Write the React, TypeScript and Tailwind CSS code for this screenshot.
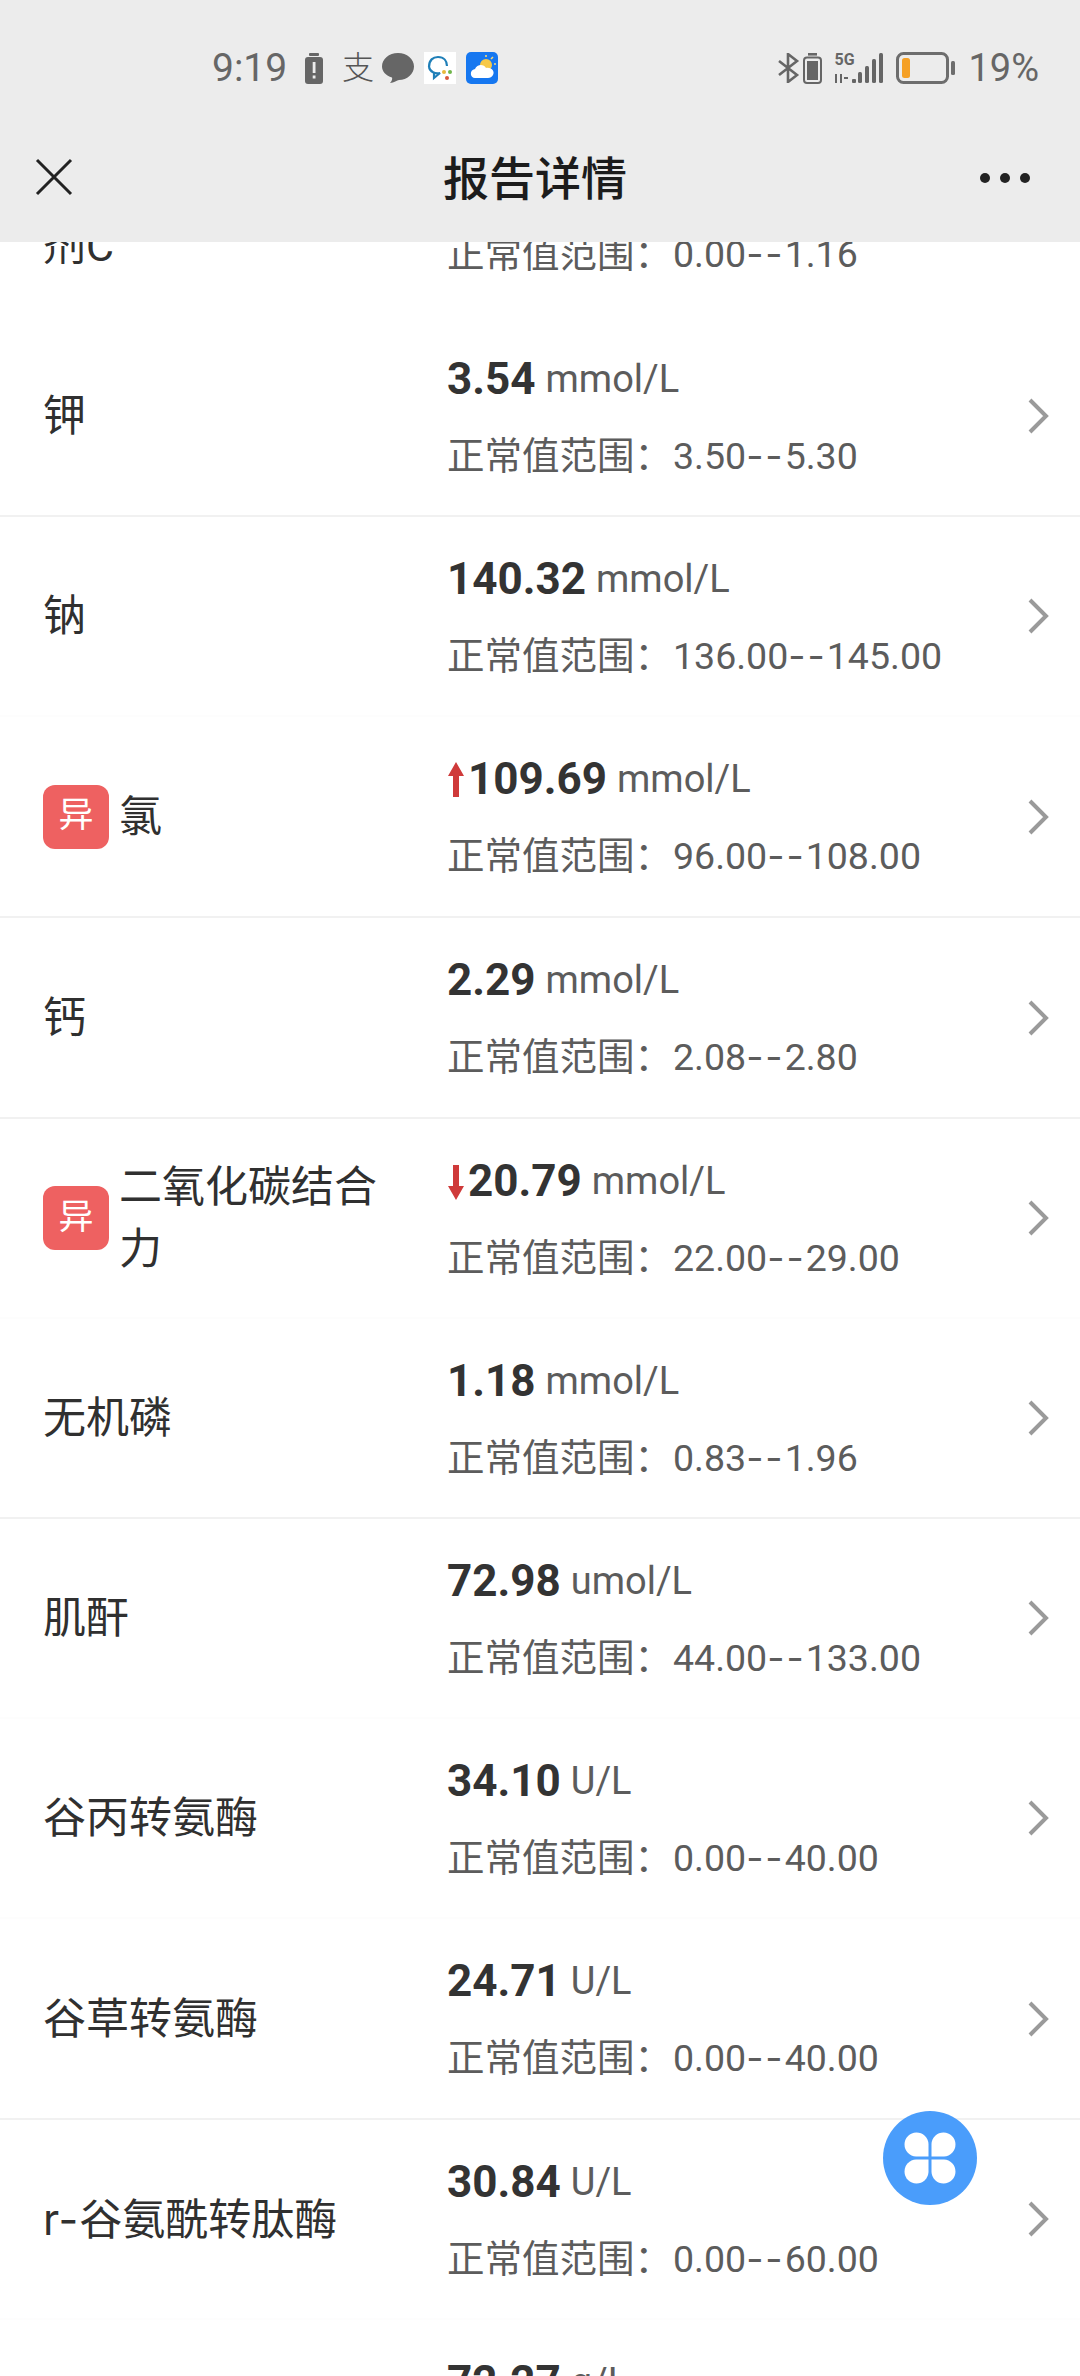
import React from "react";

const FONT = 'font-["Roboto","Noto_Sans_CJK_SC",sans-serif]';

type Item = {
  name: string;
  prefix?: string;
  value: string;
  unit: string;
  range: [string, string];
  flag?: "up" | "down";
  strong?: boolean;
  height?: string;
};

const items: Item[] = [
  { name: "钾", value: "3.54", unit: "mmol/L", range: ["3.50", "5.30"], strong: true },
  { name: "钠", value: "140.32", unit: "mmol/L", range: ["136.00", "145.00"] },
  { name: "氯", value: "109.69", unit: "mmol/L", range: ["96.00", "108.00"], flag: "up", strong: true, height: "h-[201px]" },
  { name: "钙", value: "2.29", unit: "mmol/L", range: ["2.08", "2.80"], strong: true, height: "h-[201px]" },
  { name: "二氧化碳结合力", value: "20.79", unit: "mmol/L", range: ["22.00", "29.00"], flag: "down" },
  { name: "无机磷", value: "1.18", unit: "mmol/L", range: ["0.83", "1.96"], strong: true },
  { name: "肌酐", value: "72.98", unit: "umol/L", range: ["44.00", "133.00"] },
  { name: "谷丙转氨酶", value: "34.10", unit: "U/L", range: ["0.00", "40.00"] },
  { name: "谷草转氨酶", value: "24.71", unit: "U/L", range: ["0.00", "40.00"], strong: true, height: "h-[201px]" },
  { name: "谷氨酰转肽酶", prefix: "r-", value: "30.84", unit: "U/L", range: ["0.00", "60.00"] },
];

function Arrow({ dir }: { dir: "up" | "down" }) {
  return (
    <svg width="18" height="36" viewBox="0 0 18 36" className="shrink-0 mr-[3px] mt-[2px]">
      <g transform={dir === "down" ? "rotate(180 9 18)" : undefined}>
        <path d="M9 0 L17 14 H12 V35 H6 V14 H1 Z" fill="#cf3a3a" />
      </g>
    </svg>
  );
}

function Chevron() {
  return (
    <svg width="22" height="38" viewBox="0 0 22 38" className="shrink-0">
      <path d="M3 3 L19 19 L3 35" fill="none" stroke="#9a9a9a" strokeWidth="4" />
    </svg>
  );
}

function RangeLine({ range }: { range: [string, string] }) {
  return (
    <>
      正常值范围：
      <span className="ml-[1px]">
        {range[0]}
        <span className='font-["Inter"] tracking-[2px]'>--</span>
        {range[1]}
      </span>
    </>
  );
}

function ResultRow({ item }: { item: Item }) {
  return (
    <div
      className={`flex items-center border-b-2 ${item.height ?? "h-[200px]"} ${
        item.strong ? "border-[#f1f1f1]" : "border-[#fdfdfd]"
      }`}
    >
      <div className="flex items-center w-[447px] shrink-0 pl-[43px] pr-[60px]">
        {item.flag && (
          <span className="flex items-center justify-center shrink-0 w-[66px] h-[64px] mr-[10px] rounded-[12px] bg-[#ee6161] text-white text-[35px]">
            异
          </span>
        )}
        <span className="text-[43px] leading-[62px] text-[#303030]">
          {item.prefix && <span className='font-["Inter"] tracking-[1px]'>{item.prefix}</span>}
          {item.name}
        </span>
      </div>
      <div className="flex-1 flex flex-col self-start pt-[23px]">
        <div className="flex items-center h-[78px]">
          {item.flag && <Arrow dir={item.flag} />}
          <span className="text-[44px] font-bold text-[#333333]">{item.value}</span>
          <span className="ml-[10px] text-[38px] text-[#5c5c5c]">{item.unit}</span>
        </div>
        <div className="h-[78px] -mt-[1px] leading-[78px] text-[37.5px] text-[#5c5c5c]">
          <RangeLine range={item.range} />
        </div>
      </div>
      <div className="w-[53px] shrink-0">
        <Chevron />
      </div>
    </div>
  );
}

function StatusBar() {
  return (
    <div className="flex items-center h-[136px] pl-[212px] pr-[41px] text-[#666666]">
      <span className="w-[93px] shrink-0 text-[39px] leading-none">9:19</span>
      <svg width="18" height="31" viewBox="0 0 18 31" className="shrink-0">
        <rect x="4" y="0" width="10" height="3" rx="1" fill="#666" />
        <rect x="0" y="4" width="18" height="27" rx="3" fill="#666" />
        <rect x="7.7" y="9" width="2.8" height="11" fill="#ececec" />
        <rect x="7.7" y="22.5" width="2.8" height="3" fill="#ececec" />
      </svg>
      <span className="ml-[18px] w-[34px] text-center text-[32px] font-light leading-none text-[#555555]">支</span>
      <svg width="32" height="30" viewBox="0 0 32 30" className="ml-[7px] shrink-0">
        <path d="M16 0 C25 0 32 6 32 13.5 C32 21 25 27 17 27 C15 27 12 30 8 30 C10 28 10.5 26 10 24.5 C4 22.5 0 18.5 0 13.5 C0 6 7 0 16 0 Z" fill="#666" />
      </svg>
      <svg width="32" height="32" viewBox="0 0 32 32" className="ml-[10px] shrink-0">
        <rect width="32" height="32" fill="#ffffff" />
        <path d="M5 15 C5 8 9 5 14 5 C20 5 23 9 23 14" fill="none" stroke="#1f7fb8" strokeWidth="2.2" />
        <path d="M5 15 C6 20 11 22 16 21 L10 26 L10 21" fill="none" stroke="#1f7fb8" strokeWidth="2.2" />
        <circle cx="20" cy="20" r="2" fill="#e8b83a" />
        <circle cx="26" cy="20" r="2" fill="#6fb54a" />
        <circle cx="23" cy="26" r="2" fill="#d9583b" />
      </svg>
      <svg width="32" height="32" viewBox="0 0 32 32" className="ml-[10px] shrink-0">
        <rect width="32" height="32" rx="5" fill="#1677f0" />
        <circle cx="20" cy="13" r="6" fill="#f7c948" />
        <path d="M20 3v2M27 5l-2 2M30 12h-2" stroke="#f7d97a" strokeWidth="1.6" />
        <path d="M9 26 C4 26 3 18 9 17 C11 12 18 12 20 16 C26 15 29 20 27 23 C26 25 24 26 22 26 Z" fill="#ffffff" />
      </svg>

      <div className="ml-auto flex items-center">
        <svg width="22" height="30" viewBox="0 0 22 30" className="shrink-0">
          <path d="M1 8 L19 22 L10 29 V1 L19 8 L1 22" fill="none" stroke="#666" strokeWidth="2.6" />
        </svg>
        <svg width="19" height="31" viewBox="0 0 19 31" className="ml-[3px] shrink-0">
          <rect x="5" y="0" width="9" height="2.6" fill="#666" />
          <rect x="1" y="4.5" width="17" height="25.5" rx="3" fill="none" stroke="#666" strokeWidth="2" />
          <rect x="4" y="8" width="11" height="19" fill="#666" />
        </svg>
        <div className="relative ml-[12px] w-[50px] h-[31px] shrink-0">
          <span className="absolute left-0 -top-[1px] text-[16px] leading-[16px] font-bold text-[#666666]">5G</span>
          <svg width="50" height="31" viewBox="0 0 50 31" className="absolute inset-0">
            <path d="M2 21v9M7 21v9M10 25h4" stroke="#666" strokeWidth="2" fill="none" />
            <rect x="18" y="26" width="4" height="4" rx="1" fill="#666" />
            <rect x="24" y="19" width="4" height="11" rx="1.5" fill="#666" />
            <rect x="31" y="13" width="4" height="17" rx="1.5" fill="#666" />
            <rect x="38" y="6" width="4" height="24" rx="1.5" fill="#666" />
            <rect x="45" y="0" width="4" height="30" rx="1.5" fill="#666" />
          </svg>
        </div>
        <svg width="60" height="32" viewBox="0 0 60 32" className="ml-[12px] shrink-0">
          <rect x="1.5" y="1.5" width="50" height="29" rx="6" fill="none" stroke="#6d6d6d" strokeWidth="3" />
          <rect x="6" y="6" width="8" height="20" rx="2.5" fill="#f5a025" />
          <rect x="55" y="9" width="4" height="14" rx="1.5" fill="#6d6d6d" />
        </svg>
        <span className="ml-[12px] text-[38px] leading-none">19%</span>
      </div>
    </div>
  );
}

function NavBar() {
  return (
    <div className="relative flex items-center justify-center h-[106px]">
      <svg width="38" height="38" viewBox="0 0 38 38" className="absolute left-[35px] top-[22px]">
        <path d="M2 2 L36 36 M36 2 L2 36" stroke="#222222" strokeWidth="3" />
      </svg>
      <span className="text-[46px] font-medium text-[#1c1c1c] -translate-x-[5px] -translate-y-[10px]">报告详情</span>
      <div className="absolute left-[980px] top-[37px] flex gap-[10px]">
        <span className="w-[10px] h-[10px] rounded-full bg-[#222222]" />
        <span className="w-[10px] h-[10px] rounded-full bg-[#222222]" />
        <span className="w-[10px] h-[10px] rounded-full bg-[#222222]" />
      </div>
    </div>
  );
}

export default function App() {
  return (
    <div className={`relative flex flex-col h-[2376px] w-[1080px] overflow-hidden bg-white ${FONT}`}>
      <header className="shrink-0 bg-[#ececec]">
        <StatusBar />
        <NavBar />
      </header>

      <main className="flex-1 overflow-hidden">
        {/* the list is scrolled: only the tail of the first entry is still showing */}
        <div className="flex h-[75px] overflow-hidden">
          <div className="w-[447px] shrink-0 pl-[43px] -mt-[27px] text-[43px] leading-[62px] text-[#303030]">剂C</div>
          <div className="-mt-[27px] h-[78px] leading-[78px] text-[37.5px] text-[#5c5c5c]">
            <RangeLine range={["0.00", "1.16"]} />
          </div>
        </div>
        {items.map((item) => (
          <ResultRow key={item.name} item={item} />
        ))}
        <div className="pl-[447px] pt-[23px] flex items-center h-[101px]">
          <span className="text-[44px] font-bold text-[#333333]">72.27</span>
          <span className="ml-[10px] text-[38px] text-[#5c5c5c]">g/L</span>
        </div>
      </main>

      <button className="absolute left-[883px] top-[2111px] flex items-center justify-center w-[94px] h-[94px] rounded-full bg-[#4a9dfb]">
        <svg width="52" height="52" viewBox="0 0 52 52">
          <g fill="#ffffff">
            <path d="M24.5 24.5 H12 A12 12 0 1 1 24.5 12 Z" />
            <path d="M27.5 24.5 H40 A12 12 0 1 0 27.5 12 Z" />
            <path d="M24.5 27.5 H12 A12 12 0 1 0 24.5 40 Z" />
            <path d="M27.5 27.5 H40 A12 12 0 1 1 27.5 40 Z" />
          </g>
        </svg>
      </button>
    </div>
  );
}
